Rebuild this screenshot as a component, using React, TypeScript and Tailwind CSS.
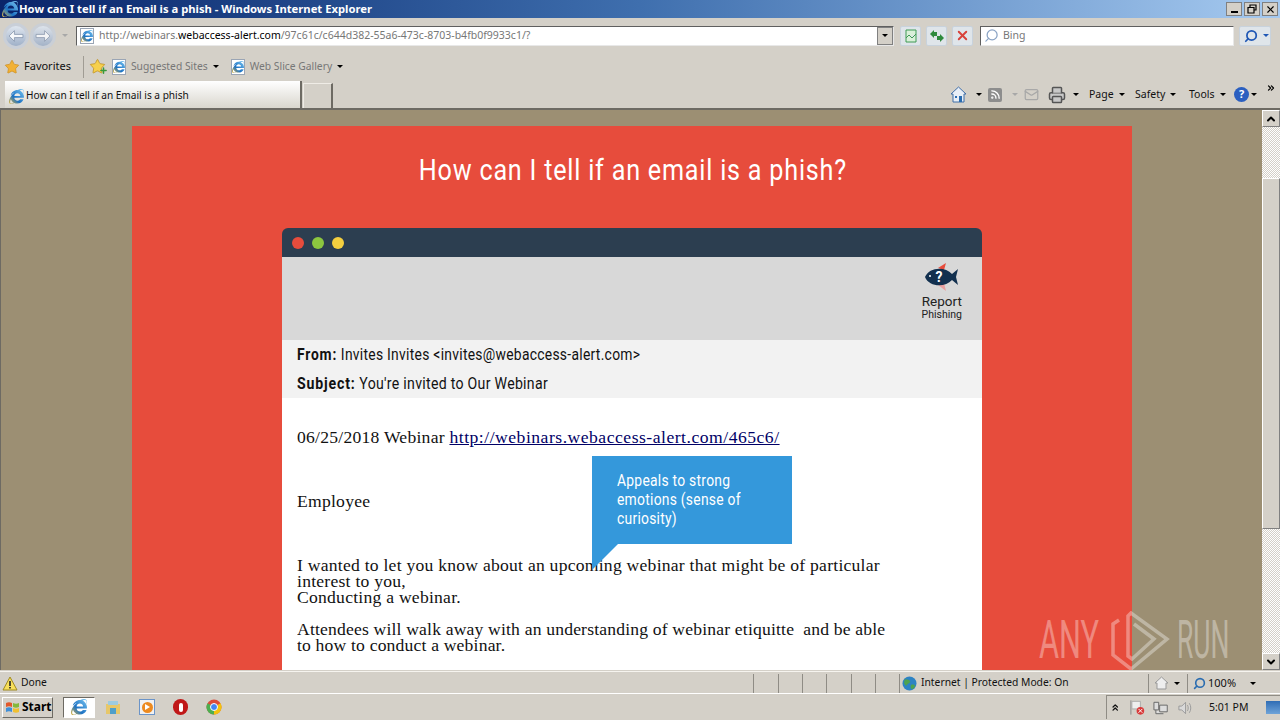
import { FaInternetExplorer } from "react-icons/fa";
import { ChevronUp, ChevronDown, ChevronsRight, ChevronsUp, Search, Rss, Printer, Mail, X, Star, Plus } from "lucide-react";

const uiFont = "font-['Noto_Sans','Open_Sans',sans-serif]";
const narrow = "font-['Roboto',sans-serif]";

function Ie({ size = 16 }: { size?: number }) {
  return <FaInternetExplorer size={size} fill="url(#ieGrad)" className="shrink-0" />;
}

function PageIe() {
  return (
    <span className="relative flex h-[16px] w-[14px] shrink-0 items-center justify-center border border-[#9aa5b5] bg-white">
      <FaInternetExplorer size={12} fill="url(#ieGrad)" />
    </span>
  );
}

function Caret({ color = "border-t-black" }: { color?: string }) {
  return <span className={`block h-0 w-0 border-x-[3px] border-t-[3px] border-x-transparent ${color}`} />;
}

function NavBall({ faded }: { faded?: boolean }) {
  return (
    <span className={`flex h-[26px] w-[26px] items-center justify-center rounded-full border-[3px] border-[#c9cfd8] bg-gradient-to-b from-[#dfe6ef] to-[#9fb0c8] ${faded ? "opacity-90" : ""}`}>
      <svg width="16" height="14" viewBox="0 0 15 13">
        <path d={faded ? "M1 5h8V1.5l5 5-5 5V8H1z" : "M14 5H6V1.5l-5 5 5 5V8h8z"} fill="#f7f9fb" stroke="#7f90a8" strokeWidth="0.7" />
      </svg>
    </span>
  );
}

function ToolBtn({ children }: { children: React.ReactNode }) {
  return (
    <span className="flex h-[20px] w-[21px] items-center justify-center rounded-[2px] border border-[#c8d2dc] bg-[#dfe5ea]">
      {children}
    </span>
  );
}

function ToolMenu({ label, w }: { label: string; w: string }) {
  return (
    <span className={`flex items-center gap-[5px] text-[10.5px] text-[#111] ${w}`}>
      {label}
      <Caret />
    </span>
  );
}

function TitleBar() {
  return (
    <div className="flex h-[18px] items-center justify-between bg-gradient-to-r from-[#0a246a] via-[#3f6fae] to-[#a6caf0] pr-[2px]">
      <div className={`flex items-center gap-[1px] pl-[2px] text-[11.25px] font-bold text-white ${uiFont}`}>
        <Ie />
        <span>How can I tell if an Email is a phish - Windows Internet Explorer</span>
      </div>
      <div className="flex gap-[2px]">
        <span className="flex h-[14px] w-[16px] items-end justify-center border border-[#808080] bg-[#d4d0c8] pb-[2px]">
          <span className="h-[2px] w-[7px] bg-black" />
        </span>
        <span className="flex h-[14px] w-[16px] items-center justify-center border border-[#808080] bg-[#d4d0c8]">
          <svg width="10" height="10" viewBox="0 0 10 10" fill="none" stroke="#000" strokeWidth="1.2">
            <path d="M3 3V1h6v5H7M1 3.5h6V9H1z" />
          </svg>
        </span>
        <span className="flex h-[14px] w-[16px] items-center justify-center border border-[#808080] bg-[#d4d0c8]">
          <X size={11} strokeWidth={2.5} className="text-black" />
        </span>
      </div>
    </div>
  );
}

function AddressRow() {
  return (
    <div className="flex h-[34px] items-center pl-[3px] pt-[1px]">
      <NavBall />
      <span className="ml-[1px]"><NavBall faded /></span>
      <span className="ml-[6px] mr-[8px]"><Caret color="border-t-[#a8a8a8]" /></span>
      <div className={`flex h-[20px] w-[818px] items-center border border-[#5f5f5f] border-r-[#e8e8e8] border-b-[#e8e8e8] bg-white pl-[3px] text-[10.5px] text-[#777] ${uiFont}`}>
        <PageIe />
        <span className="ml-[5px] flex-1">
          http://webinars.<span className="text-black">webaccess-alert.com</span>/97c61c/c644d382-55a6-473c-8703-b4fb0f9933c1/?
        </span>
        <span className="flex h-[18px] w-[16px] items-center justify-center border border-[#808080] bg-[#d4d0c8]"><Caret /></span>
      </div>
      <div className="ml-[6px] flex gap-[5px]">
        <ToolBtn>
          <svg width="14" height="14" viewBox="0 0 14 14" fill="#d9f0d9" stroke="#3f9a55"><path d="M2 1h10v12H2zM2 9l3-3 3 3 4-4" /></svg>
        </ToolBtn>
        <ToolBtn>
          <svg width="16" height="14" viewBox="0 0 16 14" fill="#2f8a3d"><path d="M1 5l4-4v2h3v4H5v2zM15 9l-4 4v-2H8V7h3V5z" /></svg>
        </ToolBtn>
        <ToolBtn><X size={15} strokeWidth={3} className="text-[#d8413a]" /></ToolBtn>
      </div>
      <div className={`ml-[7px] flex h-[20px] w-[254px] items-center gap-[4px] border border-[#5f5f5f] border-r-[#e8e8e8] border-b-[#e8e8e8] bg-white pl-[3px] text-[10.5px] text-[#777] ${uiFont}`}>
        <Search size={15} className="-scale-x-100 text-[#8aa3c4]" />
        Bing
      </div>
      <span className="ml-[5px] flex h-[20px] w-[32px] items-center rounded-[2px] border border-[#c8d2dc] bg-[#dfe5ea]">
        <span className="flex w-[21px] justify-center"><Search size={14} strokeWidth={3} className="-scale-x-100 text-[#1f57b5]" /></span>
        <span className="flex flex-1 justify-center"><Caret color="border-t-[#1f57b5]" /></span>
      </span>
    </div>
  );
}

function FavRow() {
  return (
    <div className={`flex h-[29px] items-center pl-[4px] text-[10.3px] ${uiFont}`}>
      <Star size={16} fill="#f2b134" strokeWidth={1} className="text-[#c98a1a]" />
      <span className="ml-[4px] text-[11px] text-[#111]">Favorites</span>
      <span className="ml-[12px] h-[22px] w-px bg-[#a09c94]" />
      <span className="relative ml-[5px]">
        <Star size={17} fill="#f6d04d" strokeWidth={1} className="text-[#b88a1a]" />
        <Plus size={9} strokeWidth={4} className="absolute bottom-0 right-[-2px] text-[#3a9a3a]" />
      </span>
      <span className="ml-[6px]"><PageIe /></span>
      <span className="ml-[5px] text-[#777]">Suggested Sites</span>
      <span className="ml-[5px]"><Caret /></span>
      <span className="ml-[12px]"><PageIe /></span>
      <span className="ml-[5px] text-[#777]">Web Slice Gallery</span>
      <span className="ml-[5px]"><Caret /></span>
    </div>
  );
}

function TabRow() {
  return (
    <div className={`flex h-[29px] items-end border-b-2 border-[#6d6a63] ${uiFont}`}>
      <div className="ml-[5px] flex h-[27px] w-[297px] items-center gap-[2px] border-r-2 border-[#6d6a63] bg-gradient-to-b from-white to-[#d9d6ce] pl-[4px] pt-[3px] text-[10.1px] text-[#111]">
        <Ie size={15} />
        How can I tell if an Email is a phish
      </div>
      <div className="ml-[1px] h-[25px] w-[30px] border-r-2 border-t border-l border-[#efece6] border-r-[#6d6a63]" />
      <div className="ml-auto flex h-[27px] items-center pr-[4px] text-[#333]">
        <svg width="17" height="17" viewBox="0 0 17 17">
          <path d="M8.5 1L1 8h2v8h11V8h2z" fill="#e8eef6" stroke="#3f6ea8" />
          <path d="M9 10h3v6H9z" fill="#2a6cb0" />
          <path d="M5 10h2v2H5z" fill="#2a6cb0" />
        </svg>
        <span className="ml-[9px] mr-[6px]"><Caret /></span>
        <span className="flex h-[14px] w-[14px] items-center justify-center rounded-[2px] bg-[#8d8d8d]"><Rss size={11} strokeWidth={3} className="text-white" /></span>
        <span className="ml-[10px] mr-[6px]"><Caret color="border-t-[#a8a8a8]" /></span>
        <Mail size={15} className="text-[#a8a8a8]" />
        <Printer size={18} fill="#c8c8c8" className="ml-[9px] text-[#555]" />
        <span className="ml-[7px] mr-[10px]"><Caret /></span>
        <ToolMenu label="Page" w="w-[46px]" />
        <ToolMenu label="Safety" w="w-[54px]" />
        <ToolMenu label="Tools" w="w-[45px]" />
        <span className="flex h-[15px] w-[15px] items-center justify-center rounded-full bg-[#2b5fc0] text-[11px] font-bold text-white">?</span>
        <span className="ml-[2px] mr-[9px]"><Caret /></span>
        <ChevronsRight size={10} strokeWidth={3} className="mb-[14px] text-black" />
      </div>
    </div>
  );
}

function FishLogo() {
  return (
    <svg width="36" height="30" viewBox="0 0 36 30" className="mb-[2px]">
      <path d="M14 6l8-5-2 7z" fill="#e74c3c" />
      <path d="M14 23l8 6-2-8z" fill="#e9a0a0" />
      <path d="M1 15c4-10 20-11 27-3l6-5-2 8 2 8-6-5c-7 8-23 7-27-3z" fill="#12304f" />
      <circle cx="6" cy="14" r="1" fill="#fff" />
      <text x="15" y="20" fontSize="14" fontWeight="700" textAnchor="middle" fill="#fff" fontFamily="Roboto, sans-serif">?</text>
    </svg>
  );
}

function WebPage() {
  return (
    <div className="ml-[131px] mt-[16px] h-[600px] w-[1000px] bg-[#e74c3c]">
      <h1 className={`scale-x-[0.868] pl-[2px] pt-[24px] text-center text-[29px] font-normal leading-[40px] tracking-[0.9px] text-white ${narrow}`}>
        How can I tell if an email is a phish?
      </h1>
      <div className={`ml-[150px] mt-[38px] w-[700px] ${narrow}`}>
        <div className="flex h-[29px] items-center gap-[8px] rounded-t-[6px] bg-[#2c3e50] pl-[10px]">
          <span className="h-[12px] w-[12px] rounded-full bg-[#e74c3c]" />
          <span className="h-[12px] w-[12px] rounded-full bg-[#8cc63f]" />
          <span className="h-[12px] w-[12px] rounded-full bg-[#f4cf3f]" />
        </div>
        <div className="flex h-[83px] justify-end bg-[#d8d8d8] pr-[20px] pt-[5px]">
          <div className="flex flex-col items-center text-[#222]">
            <FishLogo />
            <span className="text-[13.5px] leading-[14px]">Report</span>
            <span className="mt-[1px] text-[10.5px] leading-[12px]">Phishing</span>
          </div>
        </div>
        <div className="h-[58px] whitespace-nowrap bg-[#f2f2f2] pl-[15px] text-[17px] leading-[29px] tracking-[0.35px] text-[#111]">
          <div className="origin-left scale-x-[0.815]"><b className="tracking-[1px]">From:</b> Invites Invites &lt;invites@webaccess-alert.com&gt;</div>
          <div className="origin-left scale-x-[0.83]"><b className="tracking-[1px]">Subject:</b> You're invited to Our Webinar</div>
        </div>
        <div className="h-[300px] whitespace-nowrap bg-white pl-[15px] pt-[32px] font-['Liberation_Serif',serif] text-[16px] leading-[16px] tracking-[0.22px] text-[#111]">
          <p className="origin-left scale-x-[1.1]">06/25/2018 Webinar <a className="tracking-[0.46px] text-[#000066] underline">http://webinars.webaccess-alert.com/465c6/</a></p>
          <p className="mt-[48px] origin-left scale-x-[1.1]">Employee</p>
          <p className="mt-[48px] origin-left scale-x-[1.1]">I wanted to let you know about an upcoming webinar that might be of particular<br />interest to you,<br />Conducting a webinar.</p>
          <p className="mt-[16px] origin-left scale-x-[1.1] tracking-[0.16px]">Attendees will walk away with an understanding of webinar etiquitte&nbsp; and be able<br />to how to conduct a webinar.</p>
        </div>
      </div>
    </div>
  );
}

function Callout() {
  return (
    <div className="absolute left-[591px] top-[346px]">
      <div className={`h-[88px] w-[200px] whitespace-nowrap bg-[#3498db] pl-[25px] pt-[15px] text-[16px] leading-[19px] tracking-[0.3px] text-white ${narrow}`}>
        <div className="origin-left scale-x-[0.867]">
          Appeals to strong<br />emotions (sense of<br />curiosity)
        </div>
      </div>
      <svg width="26" height="26" viewBox="0 0 26 26" className="block"><path d="M0 0h26L0 26z" fill="#3498db" /></svg>
    </div>
  );
}

function Watermark() {
  return (
    <div className={`absolute left-[1038px] top-[501px] flex h-[59px] items-center text-[53px] font-normal leading-none text-white/35 ${narrow}`}>
      <span className="block w-[71px] origin-left scale-x-[0.58]">ANY</span>
      <svg width="60" height="59" viewBox="0 0 60 59" fill="none" stroke="currentColor" strokeWidth="3.5">
        <path d="M9 9L3 13v31l18 14 36-30L21 2l-3 3v40l4 3 22-20-20-15" />
      </svg>
      <span className="ml-[7px] block w-[56px] origin-left scale-x-[0.5]">RUN</span>
    </div>
  );
}

function Scrollbar() {
  return (
    <div className="flex w-[18px] flex-col bg-[repeating-conic-gradient(#d4d0c8_0_25%,#fff_0_50%)] bg-[length:2px_2px]">
      <span className="flex h-[17px] items-center justify-center border border-[#808080] border-l-white border-t-white bg-[#d4d0c8]"><ChevronUp size={12} strokeWidth={4} /></span>
      <span className="mt-[51px] h-[351px] border border-[#808080] border-l-white border-t-white bg-[#d4d0c8]" />
      <span className="mt-auto flex h-[17px] items-center justify-center border border-[#808080] border-l-white border-t-white bg-[#d4d0c8]"><ChevronDown size={12} strokeWidth={4} /></span>
    </div>
  );
}

function StatusBar() {
  return (
    <div className={`flex h-[23px] items-center border-y border-t-[#f6f4ef] border-b-white pt-[1px] text-[10.3px] text-[#111] ${uiFont}`}>
      <svg width="16" height="15" viewBox="0 0 16 15" className="ml-[2px]"><path d="M8 1l7 13H1z" fill="#f8df5a" stroke="#a08a20" /><path d="M7.2 5h1.6v5H7.2zM7.2 11h1.6v1.6H7.2z" fill="#222" /></svg>
      <span className="ml-[3px] w-[732px]">Done</span>
      {["w-[25px]", "w-[24px]", "w-[24px]", "w-[25px]", "w-[24px]", "w-[24px]"].map((w, i) => (
        <span key={i} className={`h-[19px] border-l border-[#8f8c85] ${w}`} />
      ))}
      <span className="flex h-[19px] w-[249px] items-center gap-[4px] border-l border-[#8f8c85] pl-[2px]">
        <svg width="15" height="15" viewBox="0 0 15 15"><circle cx="7.5" cy="7.5" r="7" fill="#2d83c4" /><path d="M3 3c2 1 4 0 5 2s-2 2-3 4-3-1-3-3zM9 9c2-1 4 0 4 1s-2 3-3 3-2-2-1-4z" fill="#4fa34f" /></svg>
        Internet | Protected Mode: On
      </span>
      <span className="flex h-[19px] w-[39px] items-center gap-[5px] border-l border-[#8f8c85] pl-[5px]">
        <svg width="15" height="14" viewBox="0 0 15 14"><path d="M7.5 1L1 7h2v6h9V7h2z" fill="#eee" stroke="#999" /></svg>
        <Caret />
      </span>
      <span className="flex h-[19px] items-center border-l border-[#8f8c85] pl-[5px] text-[11px]">
        <Search size={13} strokeWidth={3} className="-scale-x-100 text-[#2a6cb0]" />
        <span className="ml-[2px]">100%</span>
        <span className="ml-[14px]"><Caret /></span>
      </span>
    </div>
  );
}

function Taskbar() {
  return (
    <div className={`flex h-[26px] items-center text-[10.5px] ${uiFont}`}>
      <div className="ml-[2px] flex h-[21px] w-[51px] items-center gap-[2px] border border-[#6d6a63] border-l-white border-t-white pl-[2px] text-[12px] font-bold text-black">
        <svg width="15" height="15" viewBox="0 0 15 15">
          <path d="M1 3c2-1 4-1 6 0v4C5 6 3 6 1 7z" fill="#e2582a" />
          <path d="M8 3c2 1 4 1 6 0v4c-2 1-4 1-6 0z" fill="#84b83a" />
          <path d="M1 8c2-1 4-1 6 0v4c-2-1-4-1-6 0z" fill="#3f8fd8" />
          <path d="M8 8c2 1 4 1 6 0v4c-2 1-4 1-6 0z" fill="#f0c030" />
        </svg>
        Start
      </div>
      <div className="ml-[10px] flex h-[21px] w-[32px] items-center justify-center border border-[#6d6a63] border-b-white border-r-white bg-white"><Ie size={16} /></div>
      <svg width="16" height="16" viewBox="0 0 16 16" className="ml-[10px]"><path d="M1 5h14v10H1z" fill="#e7c769" /><path d="M3 2h10v4H3z" fill="#9ccbe0" /><path d="M5 9h6v6H5z" fill="#4f9fc9" /></svg>
      <span className="ml-[18px] flex h-[16px] w-[16px] items-center justify-center border border-[#6b94c8] bg-[#f1f1f1]"><span className="flex h-[11px] w-[11px] items-center justify-center rounded-full bg-[#ed8a1f]"><span className="h-0 w-0 border-y-[3px] border-l-[5px] border-y-transparent border-l-white" /></span></span>
      <span className="ml-[18px] flex h-[16px] w-[15px] items-center justify-center rounded-full bg-[#c01818]"><span className="h-[9px] w-[4px] rounded-full bg-white" /></span>
      <svg width="16" height="16" viewBox="0 0 16 16" className="ml-[18px]">
        <circle cx="8" cy="8" r="7.5" fill="#dd4b39" />
        <path d="M8 8L1.5 4.2A7.5 7.5 0 0 0 8 15.5z" fill="#4caf50" />
        <path d="M8 8v7.5A7.5 7.5 0 0 0 14.5 4.2z" fill="#f4c20d" />
        <circle cx="8" cy="8" r="3.5" fill="#4285f4" stroke="#fff" />
      </svg>
      <div className="ml-auto flex h-[24px] w-[174px] items-center border-l border-t border-l-[#8f8c85] border-t-[#8f8c85] pl-[3px] text-[#111]">
        <ChevronsUp size={11} strokeWidth={3} />
        <svg width="17" height="17" viewBox="0 0 17 17" className="ml-[9px]"><path d="M2 1v15" stroke="#888" /><path d="M3 2h9v8H3z" fill="#eee" stroke="#aaa" /><circle cx="12" cy="12" r="4" fill="#d83a3a" /><path d="M10 10l4 4m0-4l-4 4" stroke="#fff" /></svg>
        <svg width="16" height="16" viewBox="0 0 16 16" className="ml-[7px]" fill="#ddd" stroke="#666"><path d="M1 2h5v8H1zM7 5h8v7H7zM3 10v4h8" /></svg>
        <svg width="16" height="16" viewBox="0 0 16 16" className="ml-[9px]" fill="#d9d9d9" stroke="#999"><path d="M2 6h3l4-4v12l-4-4H2zM11 5c1 2 1 4 0 6M13 3c2 3 2 7 0 10" /></svg>
        <span className="ml-[17px] w-[46px]">5:01 PM</span>
        <span className="ml-[13px] h-[13px] w-[15px] bg-gradient-to-b from-[#2f6db5] to-[#6ea3d8]" />
      </div>
    </div>
  );
}

export default function App() {
  return (
    <div className="relative flex h-[720px] w-[1280px] flex-col overflow-hidden bg-[#d4d0c8]">
      <svg width="0" height="0" className="absolute">
        <defs>
          <linearGradient id="ieGrad" x1="1" y1="0" x2="0" y2="1">
            <stop offset="0" stopColor="#7cc8f2" />
            <stop offset="0.6" stopColor="#1c72c4" />
            <stop offset="1" stopColor="#e8b93a" />
          </linearGradient>
        </defs>
      </svg>
      <TitleBar />
      <AddressRow />
      <FavRow />
      <TabRow />
      <div className="relative flex h-[560px] border-l border-[#6d6a63] bg-[#9c8f73]">
        <div className="relative flex-1 overflow-hidden">
          <WebPage />
          <Callout />
          <Watermark />
        </div>
        <Scrollbar />
      </div>
      <div className="h-[1px]" />
      <StatusBar />
      <Taskbar />
    </div>
  );
}
